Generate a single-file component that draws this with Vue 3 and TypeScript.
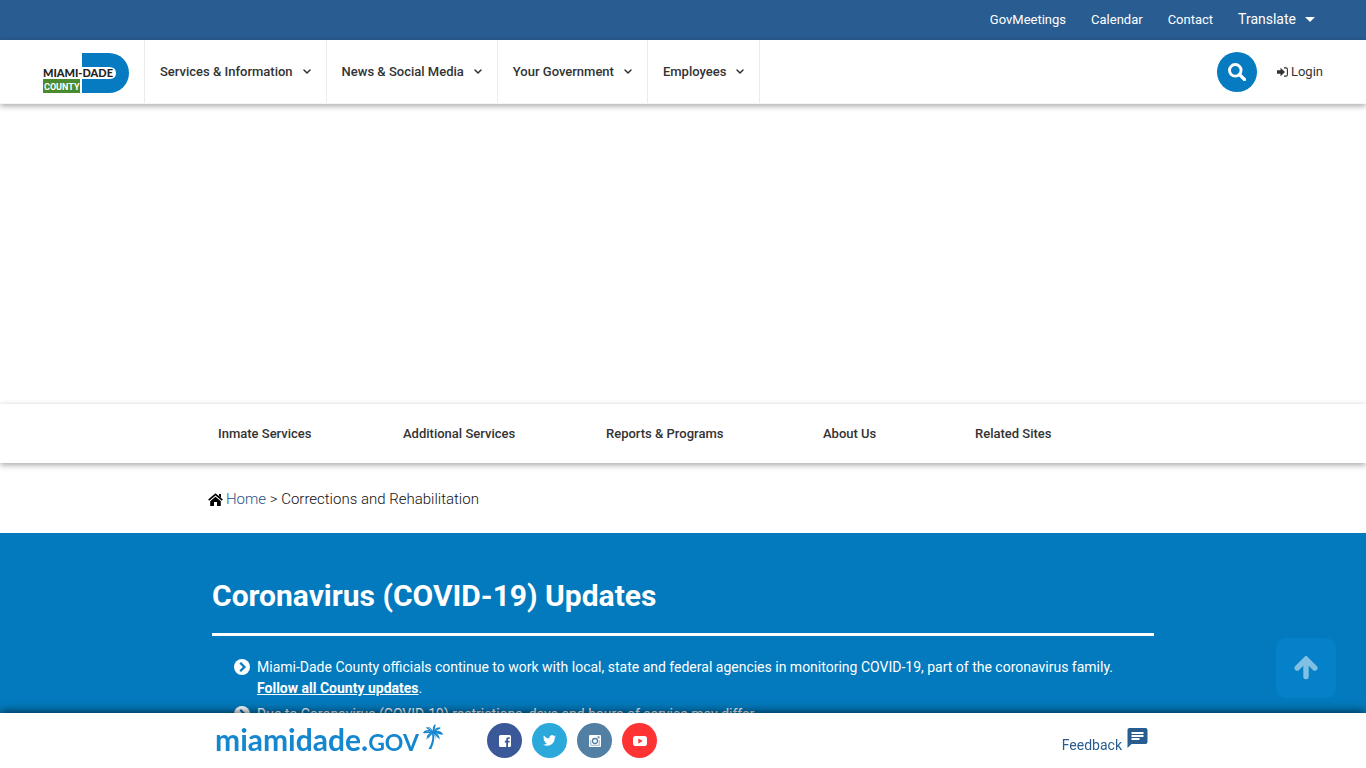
<script setup lang="ts">
interface MenuItem {
  label: string
}

const utilityLinks: string[] = ['GovMeetings', 'Calendar', 'Contact']

const mainMenu: MenuItem[] = [
  { label: 'Services & Information' },
  { label: 'News & Social Media' },
  { label: 'Your Government' },
  { label: 'Employees' },
]

const sectionMenu: MenuItem[] = [
  { label: 'Inmate Services' },
  { label: 'Additional Services' },
  { label: 'Reports & Programs' },
  { label: 'About Us' },
  { label: 'Related Sites' },
]

const scrollToTop = (): void => window.scrollTo({ top: 0, behavior: 'smooth' })
</script>

<template>
  <div class="page">
    <header>
      <nav class="utility" aria-label="Utility">
        <a v-for="link in utilityLinks" :key="link" href="#">{{ link }}</a>
        <button type="button" class="translate">
          Translate
          <svg width="10" height="5" viewBox="0 0 10 5" aria-hidden="true"><path d="M0 0h10L5 5z" fill="#fff" /></svg>
        </button>
      </nav>

      <div class="masthead">
        <a href="#" class="logo" aria-label="Miami-Dade County">
          <svg width="86" height="40" viewBox="0 0 86 40">
            <path d="M39 0h27a20 20 0 0 1 0 40H39z" fill="#077bc1" />
            <path d="M39 14h27q7 0 7 6t-7 6H39z" fill="#fff" />
            <rect y="26" width="37" height="14" fill="#4b8b2f" />
            <text x="0" y="24" class="logo-name">MIAMI-DADE</text>
            <text x="1" y="37" class="logo-county">COUNTY</text>
          </svg>
        </a>
        <nav class="main-menu" aria-label="Main">
          <button v-for="item in mainMenu" :key="item.label" type="button">
            {{ item.label }}
            <svg width="8" height="6" viewBox="0 0 8 6" aria-hidden="true">
              <path d="M1 1l3 3 3-3" fill="none" stroke="#333" stroke-width="1.5" stroke-linecap="round" stroke-linejoin="round" />
            </svg>
          </button>
        </nav>
        <button type="button" class="search" aria-label="Search">
          <svg width="18" height="18" viewBox="0 0 18 18" aria-hidden="true">
            <circle cx="7.3" cy="7.3" r="5.8" fill="none" stroke="#fff" stroke-width="2.9" />
            <path d="M11.5 11.5L16.5 16.5" stroke="#fff" stroke-width="3.2" stroke-linecap="round" />
          </svg>
        </button>
        <a href="#" class="login">
          <svg width="11" height="10" viewBox="0 0 11 10" aria-hidden="true">
            <path d="M0 3.3h3.5V.8L8 5 3.5 9.2V6.7H0z" fill="#333" />
            <path d="M7 .9h2q1.4 0 1.4 1.4v5.4Q10.400 9.100 9 9.100H7" fill="none" stroke="#333" stroke-width="1.1" />
          </svg>
          Login
        </a>
      </div>
    </header>

    <div class="banner"></div>

    <nav class="section-bar" aria-label="Department">
      <div class="section-menu">
        <a v-for="item in sectionMenu" :key="item.label" href="#">{{ item.label }}</a>
      </div>
    </nav>

    <nav class="breadcrumb" aria-label="Breadcrumb">
      <svg width="15" height="13" viewBox="0 0 15 13" aria-hidden="true">
        <path d="M.7 7.100L7.500 1.300l6.800 5.800" fill="none" stroke="#000" stroke-width="1.700" />
        <path d="M11 1h2v4l-2-1.700zM7.500 3.800l5.300 4.500V13H9V9H6v4H2.200V8.300z" fill="#000" />
      </svg>
      <span><a href="#">Home</a> &gt; Corrections and Rehabilitation</span>
    </nav>

    <main class="alerts">
      <div class="alerts-inner">
        <h1>Coronavirus (COVID-19) Updates</h1>
        <ul>
          <li>
            <svg width="16" height="16" viewBox="0 0 16 16" aria-hidden="true">
              <circle cx="8" cy="8" r="8" fill="#fff" />
              <path d="M6.200 3.800L10.400 8l-4.200 4.200" fill="none" stroke="#057abd" stroke-width="2.300" />
            </svg>
            <p>
              Miami-Dade County officials continue to work with local, state and federal agencies in monitoring COVID-19, part of the coronavirus family.<br />
              <a href="#">Follow all County updates</a>.
            </p>
          </li>
          <li>
            <svg width="16" height="16" viewBox="0 0 16 16" aria-hidden="true">
              <circle cx="8" cy="8" r="8" fill="#fff" />
              <path d="M6.200 3.800L10.400 8l-4.200 4.200" fill="none" stroke="#057abd" stroke-width="2.300" />
            </svg>
            <p>Due to Coronavirus (COVID-19) restrictions, days and hours of service may differ.</p>
          </li>
        </ul>
      </div>
    </main>

    <button type="button" class="to-top" aria-label="Back to top" @click="scrollToTop">
      <svg width="24" height="24" viewBox="0 0 24 24" aria-hidden="true">
        <path d="M3.200 12L12 3.200l8.800 8.800M12 5v15.500" fill="none" stroke="#fff" stroke-width="5.400" stroke-linecap="round" />
      </svg>
    </button>

    <footer class="dock">
      <div class="dock-inner">
        <a href="#" class="wordmark">
          <span>miamidade.<span class="gov">GOV</span></span>
          <svg width="22" height="26" viewBox="0 0 22 26" aria-hidden="true">
            <g fill="#1487cf">
              <path d="M11 8c2.200 5 1.200 11-1.800 17H6.500c3.500-6 4.600-11 3.300-16z" />
              <path d="M11 8C10 4.500 7.500 2.500 4.500 3c3 .8 4.500 2.500 6.500 5z" />
              <path d="M11 8C7 4.800 2.500 5.500.5 9.500 4 7.300 7 7 11 8z" />
              <path d="M11 8C7 8.500 4 11.500 4.800 16c1-4 3.200-6 6.200-8z" />
              <path d="M11 8c-.8-3.500 0-6.200 2.500-8-.5 3-.8 5-2.500 8z" />
              <path d="M11 8c1.300-3.500 4.500-5.300 8-4-3.500.3-5.500 1.800-8 4z" />
              <path d="M11 8c3.800-2.200 8.500-1.200 10.500 3-3.500-2.200-6.500-2.800-10.500-3z" />
              <path d="M11 8c4 .3 7 3.500 6.500 8-1.200-4-3.200-6.200-6.500-8z" />
              <path d="M11 8c2 2 3 4.500 2.300 7.500C13 12.500 12 10 11 8z" />
            </g>
            <path d="M11 8L4.500 3.500M11 8L2 8.500M11 8l-5.500 6M11 8l2-7M11 8l7-4M11 8l9 2M11 8l6 6" stroke="#1487cf" stroke-width="1.300" fill="none" />
          </svg>
        </a>
        <div class="social">
          <a href="#" class="facebook" aria-label="Facebook">
            <svg width="12" height="12" viewBox="0 0 12 12">
              <path d="M1.500 0h9A1.500 1.500 0 0 1 12 1.500v9a1.500 1.500 0 0 1-1.500 1.500H9V7.500h1.500l.2-1.700H9V4.700q0-.9.900-.9h.9V2.200H9.300Q7.200 2.200 7.200 4.500v1.300H5.800v1.700h1.400V12H1.500A1.500 1.500 0 0 1 0 10.500v-9A1.500 1.500 0 0 1 1.500 0z" fill="#fff" />
            </svg>
          </a>
          <a href="#" class="twitter" aria-label="Twitter">
            <svg width="13" height="11" viewBox="0 0 24 20">
              <path d="M24 2.400a10 10 0 0 1-2.800.8A5 5 0 0 0 23.300.5a10 10 0 0 1-3.100 1.200 4.900 4.900 0 0 0-8.400 4.500A14 14 0 0 1 1.700 1a4.900 4.900 0 0 0 1.500 6.600A5 5 0 0 1 1 7a5 5 0 0 0 3.900 4.900 5 5 0 0 1-2.200.1 5 5 0 0 0 4.600 3.400A10 10 0 0 1 0 17.500 14 14 0 0 0 21.500 5 10 10 0 0 0 24 2.400z" fill="#fff" />
            </svg>
          </a>
          <a href="#" class="instagram" aria-label="Instagram">
            <svg width="12" height="12" viewBox="0 0 12 12">
              <rect width="12" height="12" rx="1" fill="#fff" />
              <path d="M1.800 5v5.300h8.400V5" fill="none" stroke="#527fa4" stroke-width=".6" />
              <circle cx="6" cy="6" r="2.500" fill="none" stroke="#527fa4" stroke-width="1.300" />
              <rect x="8.600" y="1.400" width="1.900" height="1.900" fill="#527fa4" />
            </svg>
          </a>
          <a href="#" class="youtube" aria-label="YouTube">
            <svg width="14" height="10" viewBox="0 0 14 10">
              <rect width="14" height="10" rx="2.500" fill="#fff" />
              <path d="M5.300 2.500v5L9.800 5z" fill="#ff3333" />
            </svg>
          </a>
        </div>
        <a href="#" class="feedback">
          Feedback
          <svg width="21" height="20" viewBox="0 0 20 20" aria-hidden="true">
            <path d="M2 0h16a2 2 0 0 1 2 2v12a2 2 0 0 1-2 2H4l-4 4V2a2 2 0 0 1 2-2z" fill="#295c91" />
            <path d="M4 5h12M4 8h12M4 11h8" stroke="#fff" stroke-width="2" />
          </svg>
        </a>
      </div>
    </footer>
  </div>
</template>

<style>
body {
  margin: 0;
}
</style>

<style scoped>
.page {
  display: flex;
  flex-direction: column;
  min-height: 100vh;
  background: #fff;
  color: #333;
  font-family: Roboto, 'Liberation Sans', sans-serif;
  font-size: 13px;
}

a {
  color: inherit;
  text-decoration: none;
}

button {
  border: 0;
  padding: 0;
  background: none;
  color: inherit;
  font: inherit;
  cursor: pointer;
}

svg {
  flex: none;
}

.utility {
  box-sizing: border-box;
  display: flex;
  align-items: center;
  justify-content: flex-end;
  gap: 25px;
  height: 40px;
  padding: 0 51px 2px 0;
  background: #295c91;
  color: #fff;
}

.translate {
  display: flex;
  align-items: center;
  gap: 9px;
  font-size: 14px;
}

.masthead {
  display: flex;
  align-items: center;
  height: 63px;
  padding: 0 43px;
  border-bottom: 1px solid #f6f6f6;
  box-shadow: 0 2px 6px rgba(0, 0, 0, 0.35);
}

.logo {
  display: flex;
  margin: 3px 15px 0 0;
}

.logo-name {
  fill: #222;
  font: 900 11px Lato, sans-serif;
}

.logo-county {
  fill: #fff;
  font: 700 9px Roboto, sans-serif;
}

.main-menu {
  display: flex;
  flex: 1;
  height: 63px;
  font-weight: 500;
}

.main-menu button {
  display: flex;
  align-items: center;
  gap: 10px;
  padding: 0 15px;
  border-left: 1px solid #ebebeb;
}

.main-menu button:last-child {
  border-right: 1px solid #ebebeb;
}

.search {
  display: flex;
  align-items: center;
  justify-content: center;
  width: 40px;
  height: 40px;
  margin-right: 20px;
  border-radius: 50%;
  background: #077bc1;
}

.login {
  display: flex;
  align-items: center;
  gap: 3px;
}

.banner {
  height: 300px;
}

.section-bar {
  height: 59px;
  box-shadow: 0 2px 6px rgba(0, 0, 0, 0.35);
}

.section-menu {
  display: grid;
  grid-template-columns: 185px 203px 217px 152px auto;
  align-items: center;
  width: 930px;
  height: 59px;
  margin: 0 auto;
  font-weight: 500;
}

.breadcrumb {
  box-sizing: border-box;
  display: flex;
  align-items: center;
  gap: 3px;
  width: 950px;
  height: 70px;
  margin: 0 auto;
  padding-top: 2px;
  color: #111;
  font-size: 15px;
  font-weight: 300;
}

.breadcrumb a {
  color: #1f5288;
}

.alerts {
  flex: 1;
  background: #037abd;
  color: #fff;
}

.alerts-inner {
  width: 942px;
  margin: 0 auto;
  padding-top: 43px;
}

h1 {
  margin: 0;
  padding-bottom: 17px;
  border-bottom: 3px solid #fff;
  font-size: 30px;
  font-weight: 700;
  line-height: 40px;
}

ul {
  display: grid;
  gap: 5px;
  margin: 0;
  padding: 21px 0 0 22px;
  list-style: none;
}

li {
  display: flex;
  gap: 7px;
  font-size: 14px;
  line-height: 21px;
}

li svg {
  margin-top: 2px;
}

li p {
  margin: 0;
}

li a {
  font-weight: 700;
  text-decoration: underline;
}

.to-top {
  position: fixed;
  right: 30px;
  bottom: 70px;
  display: flex;
  align-items: center;
  justify-content: center;
  width: 60px;
  height: 60px;
  border-radius: 10px;
  background: #0481c8;
}

.to-top svg {
  opacity: 0.5;
}

.dock {
  position: fixed;
  right: 0;
  bottom: 0;
  left: 0;
  background: #fff;
  box-shadow: 0 0 10px rgba(0, 0, 0, 0.8);
}

.dock-inner {
  display: flex;
  align-items: center;
  width: 936px;
  height: 55px;
  margin: 0 auto;
}

.wordmark {
  display: flex;
  gap: 3px;
  width: 272px;
  color: #1487cf;
  font: 700 30px/32px Lato, sans-serif;
}

.wordmark svg {
  margin-top: 1px;
}

.gov {
  font-size: 23px;
}

.social {
  display: flex;
  flex: 1;
  gap: 10px;
}

.social a {
  display: flex;
  align-items: center;
  justify-content: center;
  width: 35px;
  height: 35px;
  border-radius: 50%;
}

.facebook {
  background: #3b5998;
}

.twitter {
  background: #2ba9db;
}

.instagram {
  background: #527fa4;
}

.youtube {
  background: #ff3333;
}

.feedback {
  display: flex;
  gap: 5px;
  margin: 9px 3px 0 0;
  color: #295c91;
  font-size: 14px;
  line-height: 34px;
}
</style>
